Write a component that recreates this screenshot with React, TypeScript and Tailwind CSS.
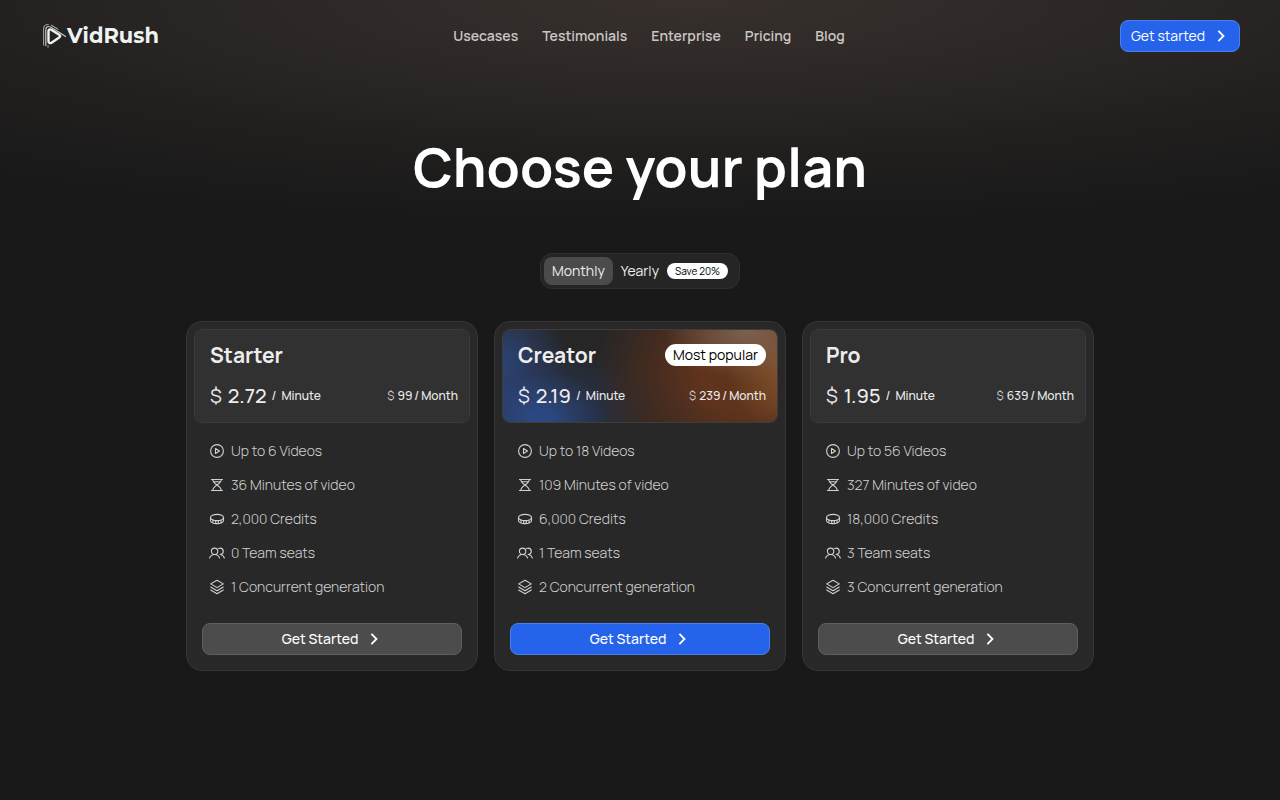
import { useState, type ReactNode } from "react";

type Plan = {
  name: string;
  perMinute: string;
  perMonth: string;
  features: string[];
  popular?: boolean;
};

const plans: Plan[] = [
  {
    name: "Starter",
    perMinute: "2.72",
    perMonth: "99",
    features: ["Up to 6 Videos", "36 Minutes of video", "2,000 Credits", "0 Team seats", "1 Concurrent generation"],
  },
  {
    name: "Creator",
    perMinute: "2.19",
    perMonth: "239",
    features: ["Up to 18 Videos", "109 Minutes of video", "6,000 Credits", "1 Team seats", "2 Concurrent generation"],
    popular: true,
  },
  {
    name: "Pro",
    perMinute: "1.95",
    perMonth: "639",
    features: ["Up to 56 Videos", "327 Minutes of video", "18,000 Credits", "3 Team seats", "3 Concurrent generation"],
  },
];

const links = ["Usecases", "Testimonials", "Enterprise", "Pricing", "Blog"];

function Icon({ children }: { children: ReactNode }) {
  return (
    <svg viewBox="0 0 16 16" className="size-4 shrink-0" fill="none" stroke="currentColor" strokeWidth="1.1" strokeLinecap="round" strokeLinejoin="round" aria-hidden="true">
      {children}
    </svg>
  );
}

const featureIcons = [
  <Icon key="play">
    <circle cx="8" cy="8" r="6.400" />
    <path d="M6.500 5.500v5L10.500 8z" />
  </Icon>,
  <Icon key="hourglass">
    <path d="M2.500 2.500h11M2.500 13.500h11M3.700 2.500c.2 2.600 1.800 3.800 4.300 5.500-2.500 1.700-4.100 2.900-4.300 5.500M12.300 2.500c-.2 2.600-1.800 3.800-4.300 5.500 2.500 1.700 4.100 2.900 4.300 5.500M4.500 4.700h7" />
  </Icon>,
  <Icon key="coin">
    <ellipse cx="8" cy="6.500" rx="6.500" ry="3.100" />
    <path d="M1.500 6.500v3c0 1.700 2.900 3.100 6.500 3.100s6.500-1.400 6.500-3.100v-3M4 9v2.400M6.700 9.700v2.700M9.300 9.700v2.700M12 9v2.400" />
  </Icon>,
  <Icon key="team">
    <circle cx="5.600" cy="6.300" r="3.200" />
    <path d="M.600 13c.8-2.200 2.600-3.500 5-3.500s4.200 1.300 5 3.500M9.600 3.400c.4-.2.900-.3 1.300-.3a3.200 3.200 0 0 1 .3 6.400M11.600 9.500c1.800.3 3.100 1.600 3.800 3.500" />
  </Icon>,
  <Icon key="layers">
    <path d="M8 1.200 14.300 4.900 8 8.600 1.700 4.900zM1.700 8 8 11.700 14.300 8M1.700 11 8 14.700 14.300 11" />
  </Icon>,
];

function Chevron() {
  return (
    <svg viewBox="0 0 16 16" className="size-4" fill="none" stroke="currentColor" strokeWidth="1.800" strokeLinecap="square" aria-hidden="true">
      <path d="m6 3.500 4.500 4.500L6 12.500" />
    </svg>
  );
}

function Logo() {
  return (
    <a href="#" className="flex items-center font-[Montserrat,Inter,sans-serif] text-[21px] leading-7 font-bold text-[#edf3f1]">
      <svg viewBox="0 0 27 26" className="h-[26px] w-[27px]" fill="none" stroke="currentColor" strokeLinecap="round" strokeLinejoin="round" aria-hidden="true">
        <path d="M8.500 8.300c0-1.600 1.300-2.400 2.700-1.500l8 4.900c1.300.8 1.300 2 0 2.800l-7.700 5.200c-1.500.9-3 .2-3-1.400z" strokeWidth="2.400" />
        <path d="M5.800 22.500V6.800C5.800 3.900 8.200 2.600 10.800 4.200L21.500 10.800l4 2.700" strokeWidth="1.200" opacity=".8" />
        <path d="M3.600 22V5.500C3.800 3 5.600 1.500 8.300 1.500M11.500 2.200l6.500 4M8 24.200v-1.600" strokeWidth="1.100" opacity=".6" />
      </svg>
      VidRush
    </a>
  );
}

function PlanCard({ plan }: { plan: Plan }) {
  return (
    <article className="rounded-2xl border border-[#363636] bg-[#282828] p-[7px]">
      <header
        className={
          plan.popular
            ? "rounded-lg border border-[#3f3c3b] bg-[#262626] bg-[radial-gradient(ellipse_80px_50px_at_88%_0%,rgba(136,116,104,0.7),transparent),radial-gradient(ellipse_60px_65px_at_104%_45%,rgba(140,92,46,0.8),transparent),radial-gradient(ellipse_150px_125px_at_88%_48%,rgba(98,52,28,0.95)_30%,rgba(80,46,30,0.75)_60%,transparent),radial-gradient(ellipse_110px_75px_at_14%_95%,rgba(44,74,136,0.9)_10%,rgba(40,54,88,0.45)_60%,transparent),radial-gradient(ellipse_65px_85px_at_0%_45%,rgba(46,76,138,0.9),transparent)] bg-clip-padding pt-[11px] pr-[11px] pb-3 pl-[15px]"
            : "rounded-lg border border-[#3a3a3a] bg-[#313131] pt-[11px] pr-[11px] pb-3 pl-[15px]"
        }
      >
        <div className="flex h-7 items-center justify-between">
          <h2 className="text-[21px] leading-7 font-bold text-[#ededed]">{plan.name}</h2>
          {plan.popular && (
            <span className="rounded-full bg-white px-2 text-sm leading-[22px] text-black">Most popular</span>
          )}
        </div>
        <div className="mt-[13px] flex h-7 items-center justify-between text-[#ededed]">
          <p className="flex items-center">
            <span className="text-xl leading-7 font-normal">$</span>
            <span className="ml-[6px] text-xl leading-7 font-medium">{plan.perMinute}</span>
            <span className="ml-[5px] text-xs font-medium">/</span>
            <span className="ml-[5px] text-xs font-medium">Minute</span>
          </p>
          <p className="flex items-center gap-[2px] text-xs font-medium">
            <span className="mr-px font-normal text-[#c8c8c8]">$</span>
            <span>{plan.perMonth}</span>
            <span>/</span>
            <span>Month</span>
          </p>
        </div>
      </header>
      <ul className="mt-[18px] flex flex-col gap-[14px] px-[15px] text-[#d2d2d2]">
        {plan.features.map((feature, i) => (
          <li key={feature} className="flex items-center gap-[6px] text-sm leading-5 font-light">
            {featureIcons[i]}
            {feature}
          </li>
        ))}
      </ul>
      <div className="px-2 pt-[26px] pb-2">
        <button
          type="button"
          className={
            plan.popular
              ? "flex h-8 w-full items-center justify-center gap-2 rounded-lg border border-[#4a7ff0] bg-[#2563eb] text-sm font-medium text-white"
              : "flex h-8 w-full items-center justify-center gap-2 rounded-lg border border-[#5f5f5f] bg-[#4c4c4c] text-sm font-medium text-white"
          }
        >
          Get Started
          <Chevron />
        </button>
      </div>
    </article>
  );
}

export default function App() {
  const [yearly, setYearly] = useState(false);
  return (
    <div className="min-h-screen bg-[#191919] bg-[radial-gradient(ellipse_88%_225px_at_54%_0%,#37302d,#2e2927_32%,#22201f_65%,#191919)] bg-no-repeat font-[Manrope,Inter,sans-serif] text-white">
      <header className="grid h-[72px] grid-cols-[1fr_auto_1fr] items-center px-10">
        <Logo />
        <nav className="flex gap-6 pl-[18px] text-sm font-semibold text-[#c9c6c4]">
          {links.map((link) => (
            <a key={link} href="#">
              {link}
            </a>
          ))}
        </nav>
        <a href="#" className="flex h-8 items-center gap-2 justify-self-end rounded-lg border border-[#4a7ff0] bg-[#2563eb] px-[10px] text-sm">
          Get started
          <Chevron />
        </a>
      </header>
      <main className="flex flex-col items-center px-6 pb-16">
        <h1 className="mt-16 text-center text-[54px] leading-[60px] font-bold">Choose your plan</h1>
        <div className="mt-[57px] flex items-center rounded-xl border border-[#2e2e2e] bg-[#252525] p-[3px] text-sm">
          <button
            type="button"
            aria-pressed={!yearly}
            onClick={() => setYearly(false)}
            className={yearly ? "h-7 rounded-lg px-2" : "h-7 rounded-lg bg-[#4b4b4b] px-2 text-[#ededed]"}
          >
            Monthly
          </button>
          <button
            type="button"
            aria-pressed={yearly}
            onClick={() => setYearly(true)}
            className={yearly ? "flex h-7 items-center gap-2 rounded-lg bg-[#4b4b4b] px-2" : "flex h-7 items-center gap-2 rounded-lg px-2 text-[#ededed]"}
          >
            Yearly
            <span className="rounded-full bg-white px-2 text-[10px] leading-4 text-black">Save 20%</span>
          </button>
        </div>
        <section className="mt-8 grid w-full max-w-[908px] grid-cols-1 gap-4 md:grid-cols-3">
          {plans.map((plan) => (
            <PlanCard key={plan.name} plan={plan} />
          ))}
        </section>
      </main>
    </div>
  );
}
